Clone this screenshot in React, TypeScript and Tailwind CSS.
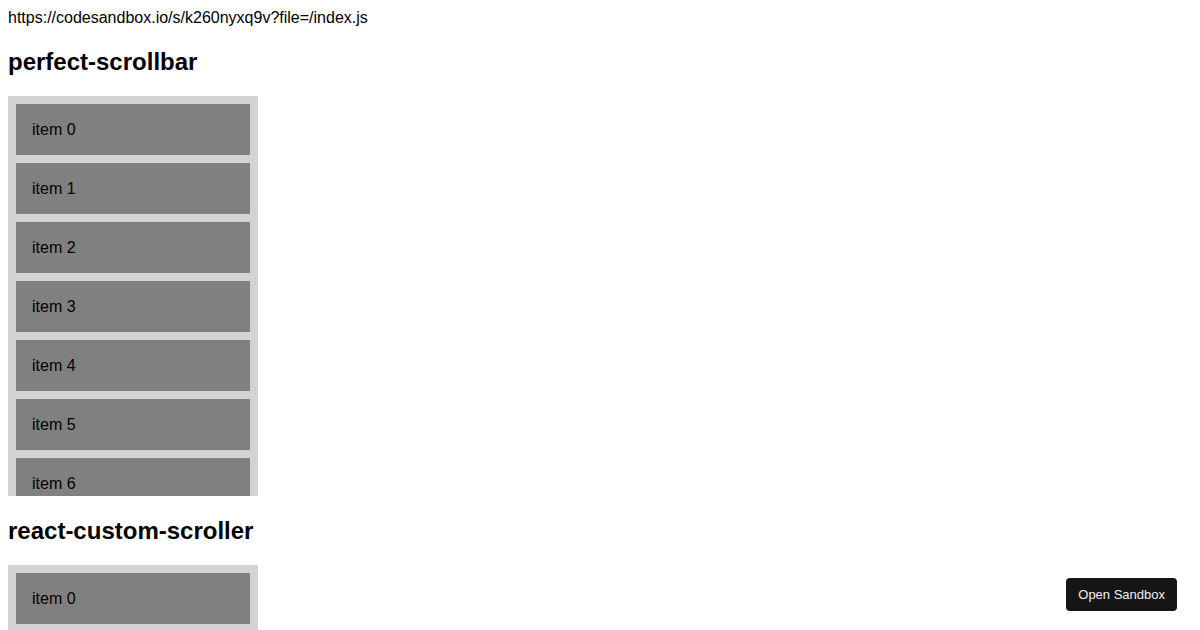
import React from 'react';

const items = Array.from({ length: 10 }, (_, i) => `item ${i}`);

const ScrollBox: React.FC = () => (
  <div className="w-[250px] h-[400px] overflow-hidden bg-[#d3d3d3] p-2 flex flex-col gap-2 shrink-0">
    {items.map((label) => (
      <div key={label} className="bg-[#808080] px-4 py-4 leading-[19px] text-[16px] text-black shrink-0">
        {label}
      </div>
    ))}
  </div>
);

const App: React.FC = () => {
  return (
    <div className="h-[630px] overflow-hidden bg-white font-['Liberation_Sans',Arial,sans-serif] text-black">
      <div className="p-2 flex flex-col">
        <div className="text-[16px] leading-[19px]">https://codesandbox.io/s/k260nyxq9v?file=/index.js</div>

        <h2 className="my-5 text-[24px] leading-[29px] font-bold">perfect-scrollbar</h2>
        <ScrollBox />

        <h2 className="my-5 text-[24px] leading-[29px] font-bold">react-custom-scroller</h2>
        <ScrollBox />
      </div>

      {/* Sandbox button */}
      <button className="fixed right-[23px] bottom-[19px] h-[33px] px-3 rounded-[4px] bg-[#151515] text-[#f0f0f0] text-[13px] font-['Liberation_Sans',Arial,sans-serif]">
        Open Sandbox
      </button>
    </div>
  );
};

export default App;
